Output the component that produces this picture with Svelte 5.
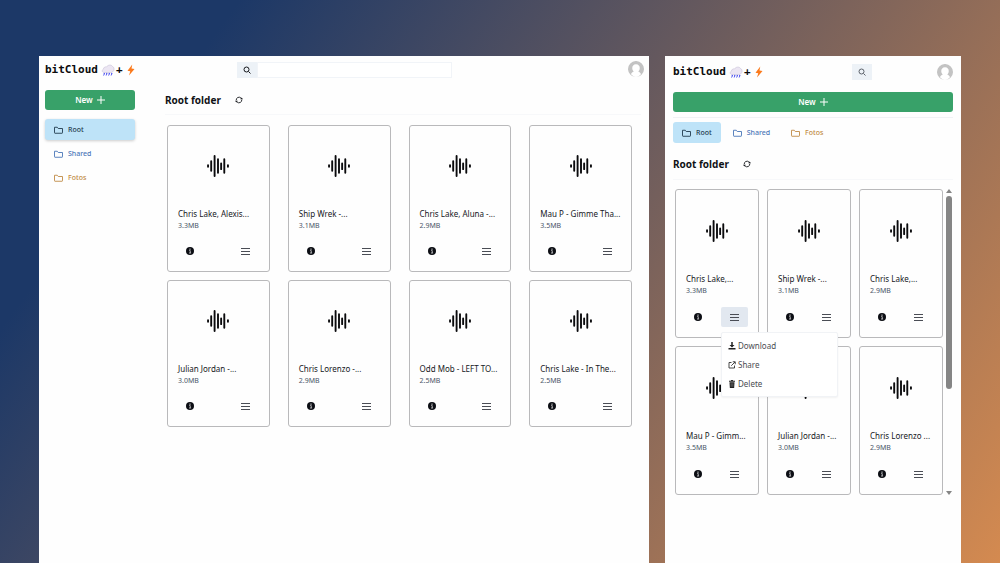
<script>
  const desktopFiles = [
    ['Chris Lake, Alexis...', '3.3MB'],
    ['Ship Wrek -...', '3.1MB'],
    ['Chris Lake, Aluna -...', '2.9MB'],
    ['Mau P - Gimme Tha...', '3.5MB'],
    ['Julian Jordan -...', '3.0MB'],
    ['Chris Lorenzo -...', '2.9MB'],
    ['Odd Mob - LEFT TO...', '2.5MB'],
    ['Chris Lake - In The...', '2.5MB']
  ];
  const mobileFiles = [
    ['Chris Lake,...', '3.3MB'],
    ['Ship Wrek -...', '3.1MB'],
    ['Chris Lake,...', '2.9MB'],
    ['Mau P - Gimm...', '3.5MB'],
    ['Julian Jordan -...', '3.0MB'],
    ['Chris Lorenzo ...', '2.9MB']
  ];
  const folders = [
    ['Root', 'root'],
    ['Shared', 'shared'],
    ['Fotos', 'fotos']
  ];
  let openCard = $state(0);
</script>

{#snippet logo()}
  <a class="logo" href="#home">
    <span>bitCloud</span>
    <svg class="cloud" viewBox="0 0 28 26" aria-hidden="true">
      <path d="M6 17c-4 0-5-5-1-7 0-3 3-5 6-4 3-5 10-5 12-1 4 1 4 8 1 10-1 2-4 2-6 2z" fill="#ece6f3" stroke="#c9c2d8" stroke-width="1.2" />
      <path d="M7 18l-2 5M12 18l-2 5M17 18l-2 5M22 18l-2 5" stroke="#3b40f0" stroke-width="2.2" stroke-dasharray="3.6 1" />
    </svg>
    <span>+</span>
    <svg class="bolt" viewBox="0 0 16 24" aria-hidden="true">
      <path d="M10.500 1L1 13.500l5.500.8L4 23l11-13-6-.8z" fill="#fb7a1c" />
    </svg>
  </a>
{/snippet}

{#snippet searchIcon()}
  <svg class="i8" viewBox="0 0 16 16" aria-hidden="true" fill="none" stroke="currentColor" stroke-width="2">
    <circle cx="7" cy="7" r="5" /><path d="M11 11l4 4" />
  </svg>
{/snippet}

{#snippet avatar()}
  <button class="avatar" aria-label="Account">
    <svg viewBox="0 0 32 32" aria-hidden="true">
      <path d="M5 27.600a16 16 0 1 1 22 0q-2 2-4.500 2.900h-13Q7 29.600 5 27.600z" fill="#c3c3c3" />
      <path d="M16 6.500c-5 0-7.500 3.500-7.500 7.500 0 3 1 5.500 3 7-2.500 1-4.500 2.500-5.500 5.500Q10.500 32 16 32t10-5.500c-1-3-3-4.500-5.500-5.500 2-1.500 3-4 3-7 0-4-2.500-7.500-7.500-7.500z" fill="#fff" />
    </svg>
  </button>
{/snippet}

{#snippet newButton()}
  <button class="new">New
    <svg viewBox="0 0 16 16" aria-hidden="true"><path d="M8 0v16M0 8h16" stroke="currentColor" stroke-width="2" /></svg>
  </button>
{/snippet}

{#snippet folderLinks()}
  {#each folders as [label, kind]}
    <a class="folder {kind}" href="#{kind}">
      <svg viewBox="0 0 18 16" aria-hidden="true"><path d="M1 13.500v-11h5.500l2 2.500H17v8.500q0 1-1 1H2q-1 0-1-1z" fill="none" stroke="currentColor" stroke-width="1.800" stroke-linejoin="round" /></svg>
      {label}
    </a>
  {/each}
{/snippet}

{#snippet heading()}
  <div class="heading">
    <h2>Root folder</h2>
    <button class="refresh" aria-label="Refresh">
      <svg class="i8" viewBox="0 0 16 16" aria-hidden="true">
        <path d="M2.500 8.500A5.500 5.500 0 0 1 12 4.200M13.500 7.500A5.500 5.500 0 0 1 4 11.800" fill="none" stroke="currentColor" stroke-width="1.800" />
        <path d="M10.500 6.500h5.500l-2.700-3.500zM0 9.500h5.500L2.700 13z" fill="currentColor" />
      </svg>
    </button>
  </div>
{/snippet}

{#snippet card(file, open, toggle)}
  <article class="card">
    <svg class="wave" viewBox="0 0 42 42" aria-hidden="true">
      <path d="M2 19.500v3M8 12v18M14.500 2v38M21 8v26M27 16v11M33 8v26M40 19.500v3" stroke="#0b0b0d" stroke-width="3.600" stroke-linecap="round" />
    </svg>
    <h3>{file[0]}</h3>
    <p>{file[1]}</p>
    <div class="actions">
      <button class="info" aria-label="Details">
        <svg class="i8" viewBox="0 0 16 16" aria-hidden="true">
          <circle cx="8" cy="8" r="8" fill="#0c0e14" />
          <circle cx="8" cy="4.200" r="1.300" fill="#fff" /><path d="M6.300 7.200h2.200v4.600M6 12h4.200" stroke="#fff" stroke-width="1.300" fill="none" />
        </svg>
      </button>
      <div class="more">
        <button class="options" class:open aria-label="Options" onclick={toggle}>
          <svg class="burger" viewBox="0 0 9 8" aria-hidden="true"><path d="M0 1.500h9M0 4.500h9M0 7.500h9" stroke="#4a4d55" stroke-width="1" /></svg>
        </button>
        {#if open}
          <div class="menu">
            <button>
              <svg class="i8" viewBox="0 0 16 16" aria-hidden="true"><path d="M6.500 0h3v6H13l-5 5-5-5h3.500zM1 12h14v3H1z" fill="#222" /></svg>
              Download
            </button>
            <button>
              <svg class="i8" viewBox="0 0 16 16" aria-hidden="true"><path d="M7 3H2v11h11V9M6.500 9.500L14 2M9.500 1.500h5v5" fill="none" stroke="#333" stroke-width="1.800" /></svg>
              Share
            </button>
            <button>
              <svg class="i8" viewBox="0 0 16 16" aria-hidden="true"><path d="M2 1.500h3.500L6.500 0h3l1 1.500H14v2H2zM3 4.500h10L12.300 16H3.700z" fill="#222" /><path d="M6 6.500v7M8 6.500v7M10 6.500v7" stroke="#999" stroke-width=".8" /></svg>
              Delete
            </button>
          </div>
        {/if}
      </div>
    </div>
  </article>
{/snippet}

<main>
  <section class="window desktop">
    <header>
      {@render logo()}
      <form class="search">
        <button type="button" aria-label="Search">{@render searchIcon()}</button>
        <input type="text" aria-label="Search files" />
      </form>
      {@render avatar()}
    </header>
    <div class="body">
      <aside>
        {@render newButton()}
        <nav>{@render folderLinks()}</nav>
      </aside>
      <div class="content">
        {@render heading()}
        <div class="grid">
          {#each desktopFiles as file}{@render card(file, false, () => {})}{/each}
        </div>
      </div>
    </div>
  </section>

  <section class="window mobile">
    <header>
      {@render logo()}
      <form class="search">
        <button type="button" aria-label="Search">{@render searchIcon()}</button>
      </form>
      {@render avatar()}
    </header>
    {@render newButton()}
    <nav>{@render folderLinks()}</nav>
    {@render heading()}
    <div class="scroller">
      <div class="grid">
        {#each mobileFiles as file, i}
          {@render card(file, openCard === i, () => (openCard = openCard === i ? -1 : i))}
        {/each}
      </div>
      <div class="scrollbar" aria-hidden="true">
        <svg viewBox="0 0 6 4"><path d="M3 0l3 4H0z" /></svg>
        <div class="track"><div class="thumb"></div></div>
        <svg viewBox="0 0 6 4"><path d="M3 4l3-4H0z" /></svg>
      </div>
    </div>
  </section>
</main>

<style>
  :global(body) {
    margin: 0;
  }
  main {
    box-sizing: border-box;
    min-height: 100vh;
    display: grid;
    grid-template-columns: 610fr 296fr;
    gap: 16px;
    padding: 56px 39px 0;
    background: linear-gradient(126deg, #1c3867 17%, #d48a50 100%);
    font-family: "Noto Sans", "Open Sans", sans-serif;
    font-size: 8px;
    line-height: 12px;
    color: #16181d;
  }
  .window {
    background: #fefefe;
    min-width: 0;
  }
  button {
    border: 0;
    padding: 0;
    margin: 0;
    background: none;
    font: inherit;
    color: inherit;
    display: flex;
    align-items: center;
    justify-content: center;
    cursor: pointer;
  }
  svg {
    display: block;
    flex: none;
  }
  a {
    text-decoration: none;
    color: inherit;
  }
  .i8 {
    width: 8px;
    height: 8px;
  }
  header {
    display: grid;
    align-items: center;
    height: 28px;
  }
  .desktop header {
    grid-template-columns: 192px 215px 1fr;
    padding: 0 5px 0 6px;
  }
  .mobile header {
    grid-template-columns: 179px 20px 1fr;
    height: 32px;
  }
  .logo {
    display: flex;
    align-items: center;
    font: bold 11px/16px "DejaVu Sans Mono", monospace;
    color: #0b0b0d;
  }
  .cloud {
    width: 14px;
    height: 13px;
    margin: 0 1px 0 3px;
  }
  .bolt {
    width: 8px;
    height: 12px;
    margin-left: 4px;
  }
  .search {
    display: flex;
    height: 16px;
  }
  .search button {
    width: 20px;
    background: #edf2f7;
  }
  .mobile .search button {
    color: #5c626b;
  }
  .search input {
    flex: 1;
    min-width: 0;
    box-sizing: border-box;
    border: 1px solid #f1f4f8;
    background: #fff;
    padding: 0 4px;
    font: inherit;
  }
  .avatar {
    justify-self: end;
  }
  .avatar svg {
    width: 16px;
    height: 16px;
  }
  .desktop .avatar {
    align-self: start;
    margin-top: 5px;
  }
  .body {
    display: grid;
    grid-template-columns: 90px 1fr;
    gap: 30px;
    padding: 6px 8px 0 6px;
  }
  .new {
    width: 100%;
    height: 20px;
    gap: 4px;
    border-radius: 3px;
    background: #38a169;
    color: #fff;
    font-weight: 600;
  }
  .new svg {
    width: 8px;
    height: 8px;
  }
  .folder {
    display: flex;
    align-items: center;
    gap: 5px;
    height: 21px;
    box-sizing: border-box;
    padding: 0 9px;
    border-radius: 3px;
    font-size: 7px;
    font-weight: 500;
  }
  .folder svg {
    width: 9px;
    height: 8px;
  }
  .root {
    background: #bee3f8;
    color: #1f3a4d;
  }
  .shared {
    color: #4a76b8;
  }
  .fotos {
    color: #c08a45;
  }
  .desktop nav {
    display: grid;
    gap: 3px;
    margin-top: 9px;
  }
  .desktop .root {
    box-shadow: 0 1px 3px #0003;
  }
  .heading {
    box-sizing: border-box;
    display: flex;
    align-items: center;
    gap: 14px;
    border-bottom: 1px solid #f7f8fa;
  }
  h2 {
    margin: 0;
    font-size: 10px;
    line-height: 20px;
    font-weight: 700;
    color: #101216;
  }
  .desktop .heading {
    height: 25px;
    padding-bottom: 4px;
  }
  .grid {
    display: grid;
    gap: 8px;
  }
  .desktop .grid {
    grid-template-columns: repeat(4, minmax(0, 1fr));
    column-gap: 18px;
    padding: 10px 9px 0 2px;
  }
  .card {
    box-sizing: border-box;
    border: 1px solid #b9b9bb;
    border-radius: 3px;
    padding: 29px 10px 10px;
    min-width: 0;
  }
  .wave {
    width: 22px;
    height: 22px;
    margin: 0 auto 31px;
  }
  h3 {
    margin: 0;
    font-size: 8px;
    line-height: 12px;
    font-weight: 400;
    white-space: nowrap;
  }
  .card p {
    margin: 0 0 9px;
    font-size: 7px;
    line-height: 12px;
    color: #4a5568;
  }
  .actions {
    display: flex;
    justify-content: space-between;
  }
  .info,
  .options {
    width: 24px;
    height: 20px;
    border-radius: 2px;
  }
  .options {
    width: 27px;
  }
  .more {
    position: relative;
  }
  .open {
    background: #e2e8f0;
  }
  .burger {
    width: 9px;
    height: 8px;
  }
  .menu {
    position: absolute;
    z-index: 2;
    top: 25px;
    left: 0;
    width: 117px;
    box-sizing: border-box;
    padding: 3px 6px;
    border-radius: 2px;
    background: #fff;
    border: 1px solid #f1f3f6;
    box-shadow: 0 1px 2px #0000000d;
    color: #4b4d52;
  }
  .menu button {
    width: 100%;
    height: 19px;
    gap: 2px;
    justify-content: flex-start;
  }
  .mobile {
    padding: 0 8px;
  }
  .mobile .new {
    margin-top: 4px;
  }
  .mobile nav {
    display: flex;
    gap: 3px;
    margin-top: 5px;
    padding-top: 4px;
    border-top: 1px solid #f0f2f5;
  }
  .mobile .heading {
    margin-top: 11px;
    height: 26px;
    padding-bottom: 6px;
  }
  .scroller {
    display: flex;
    gap: 3px;
    padding: 9px 1px 0 2px;
  }
  .mobile .grid {
    flex: 1;
    min-width: 0;
    grid-template-columns: repeat(3, minmax(0, 1fr));
  }
  .mobile .card {
    padding-top: 30px;
  }
  .mobile .card p {
    margin-bottom: 10px;
  }
  .scrollbar {
    display: flex;
    flex-direction: column;
    gap: 3px;
    width: 6px;
    fill: #858585;
  }
  .scrollbar svg {
    width: 6px;
    height: 4px;
  }
  .track {
    flex: 1;
  }
  .thumb {
    height: 66%;
    border-radius: 3px;
    background: #858585;
  }
</style>
